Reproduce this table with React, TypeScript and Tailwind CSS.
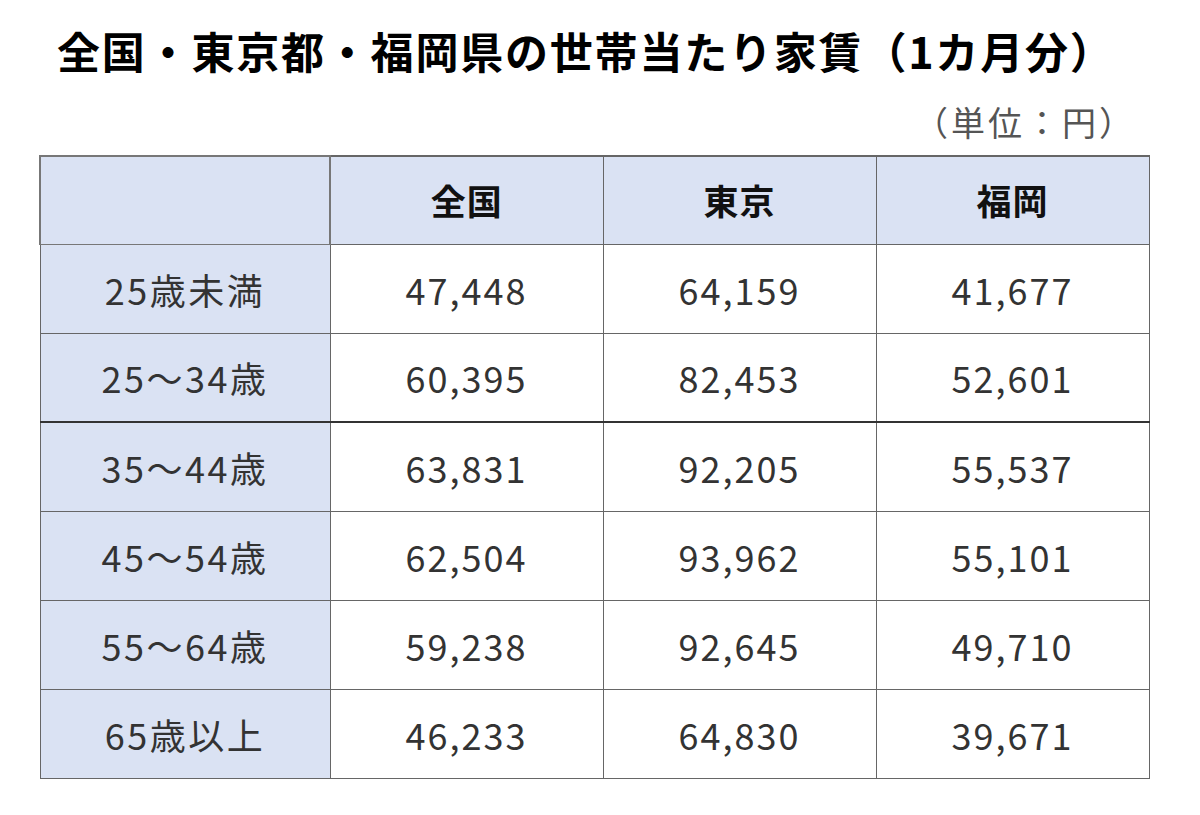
const ROWS = [
  { label: "25歳未満", values: ["47,448", "64,159", "41,677"] },
  { label: "25～34歳", values: ["60,395", "82,453", "52,601"] },
  { label: "35～44歳", values: ["63,831", "92,205", "55,537"] },
  { label: "45～54歳", values: ["62,504", "93,962", "55,101"] },
  { label: "55～64歳", values: ["59,238", "92,645", "49,710"] },
  { label: "65歳以上", values: ["46,233", "64,830", "39,671"] },
];

const HEADERS = ["全国", "東京", "福岡"];

export default function App() {
  return (
    <div
      className="w-[1200px] h-[815px] bg-white overflow-hidden"
      style={{ fontFamily: '"Noto Sans CJK JP", "Noto Sans", sans-serif' }}
    >
      {/* Title */}
      <h1 className="pl-[57px] pt-[24px] text-[43px] leading-[52px] font-bold text-black tracking-[1.8px]">
        全国・東京都・福岡県の世帯当たり家賃（1カ月分）
      </h1>
      <div className="pr-[64px] mt-[22px] text-right text-[34px] leading-[48px] text-[#555] tracking-[3px]">
        （単位：円）
      </div>

      {/* Table */}
      <table className="ml-[39px] mt-[9px] border-collapse w-[1109px] table-fixed">
        <colgroup>
          <col className="w-[290px]" />
          <col className="w-[273px]" />
          <col className="w-[273px]" />
          <col className="w-[273px]" />
        </colgroup>
        <thead>
          <tr className="h-[88px]">
            <th className="bg-[#dae2f3] border-2 border-[#777] border-b"></th>
            {HEADERS.map((h) => (
              <th
                key={h}
                className="bg-[#dae2f3] border border-t-2 border-[#666] text-[35px] font-bold text-[#111] tracking-[1px]"
              >
                {h}
              </th>
            ))}
          </tr>
        </thead>
        <tbody>
          {ROWS.map((row, i) => (
            <tr
              key={row.label}
              className={
                i === 1
                  ? "h-[89px] border-b-2 border-[#333]"
                  : "h-[89px]"
              }
            >
              <td className="bg-[#dae2f3] border border-[#666] text-center text-[36px] text-[#333] tracking-[2.5px]">
                {row.label}
              </td>
              {row.values.map((v, j) => (
                <td
                  key={j}
                  className="border border-[#666] text-center text-[36px] text-[#333] tracking-[2px]"
                >
                  {v}
                </td>
              ))}
            </tr>
          ))}
        </tbody>
      </table>
    </div>
  );
}
